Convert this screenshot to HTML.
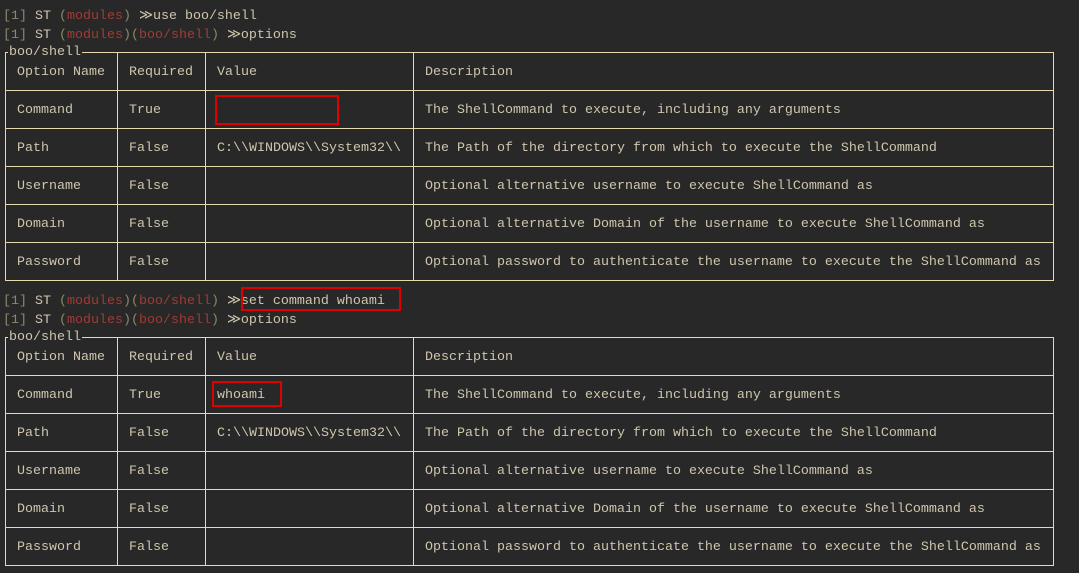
<!DOCTYPE html>
<html><head><style>
body{margin:0;background:#282828;width:1079px;height:573px;overflow:hidden;font-family:"Liberation Mono",monospace;font-size:13.33px;color:#cfc6ad;position:relative}
.l{position:absolute;left:3px;white-space:pre;line-height:19px}
.d{color:#8f876c}.r{color:#a33a33}
table{position:absolute;left:5px;border-collapse:collapse;table-layout:fixed;width:1049px}
td{border:1px solid #e6d9b0;height:35px;padding:2px 0 0 11px;white-space:pre;overflow:hidden}
.lab{position:absolute;left:8px;background:#282828;line-height:14px;padding:0 1px;color:#cfc6ad}
.box{position:absolute;border:2px solid #e00000;box-sizing:border-box}
</style></head><body>
<div class="l" style="top:7px"><span class="d">[1]</span> ST <span class="d">(</span><span class="r">modules</span><span class="d">)</span> ≫use boo/shell</div>
<div class="l" style="top:26px"><span class="d">[1]</span> ST <span class="d">(</span><span class="r">modules</span><span class="d">)(</span><span class="r">boo/shell</span><span class="d">)</span> ≫options</div>
<table style="top:52px"><colgroup><col style="width:112px"><col style="width:88px"><col style="width:208px"><col></colgroup>
<tr><td>Option Name</td><td>Required</td><td>Value</td><td>Description</td></tr>
<tr><td>Command</td><td>True</td><td></td><td>The ShellCommand to execute, including any arguments</td></tr>
<tr><td>Path</td><td>False</td><td>C:\\WINDOWS\\System32\\</td><td>The Path of the directory from which to execute the ShellCommand</td></tr>
<tr><td>Username</td><td>False</td><td></td><td>Optional alternative username to execute ShellCommand as</td></tr>
<tr><td>Domain</td><td>False</td><td></td><td>Optional alternative Domain of the username to execute ShellCommand as</td></tr>
<tr><td>Password</td><td>False</td><td></td><td>Optional password to authenticate the username to execute the ShellCommand as</td></tr>
</table>
<div class="lab" style="top:46px">boo/shell</div>
<div class="l" style="top:292px"><span class="d">[1]</span> ST <span class="d">(</span><span class="r">modules</span><span class="d">)(</span><span class="r">boo/shell</span><span class="d">)</span> ≫set command whoami</div>
<div class="l" style="top:311px"><span class="d">[1]</span> ST <span class="d">(</span><span class="r">modules</span><span class="d">)(</span><span class="r">boo/shell</span><span class="d">)</span> ≫options</div>
<table style="top:337px"><colgroup><col style="width:112px"><col style="width:88px"><col style="width:208px"><col></colgroup>
<tr><td>Option Name</td><td>Required</td><td>Value</td><td>Description</td></tr>
<tr><td>Command</td><td>True</td><td>whoami</td><td>The ShellCommand to execute, including any arguments</td></tr>
<tr><td>Path</td><td>False</td><td>C:\\WINDOWS\\System32\\</td><td>The Path of the directory from which to execute the ShellCommand</td></tr>
<tr><td>Username</td><td>False</td><td></td><td>Optional alternative username to execute ShellCommand as</td></tr>
<tr><td>Domain</td><td>False</td><td></td><td>Optional alternative Domain of the username to execute ShellCommand as</td></tr>
<tr><td>Password</td><td>False</td><td></td><td>Optional password to authenticate the username to execute the ShellCommand as</td></tr>
</table>
<div class="lab" style="top:331px">boo/shell</div>
<div class="box" style="left:215px;top:95px;width:124px;height:30px"></div>
<div class="box" style="left:241px;top:287px;width:160px;height:24px"></div>
<div class="box" style="left:212px;top:381px;width:70px;height:26px"></div>
</body></html>
